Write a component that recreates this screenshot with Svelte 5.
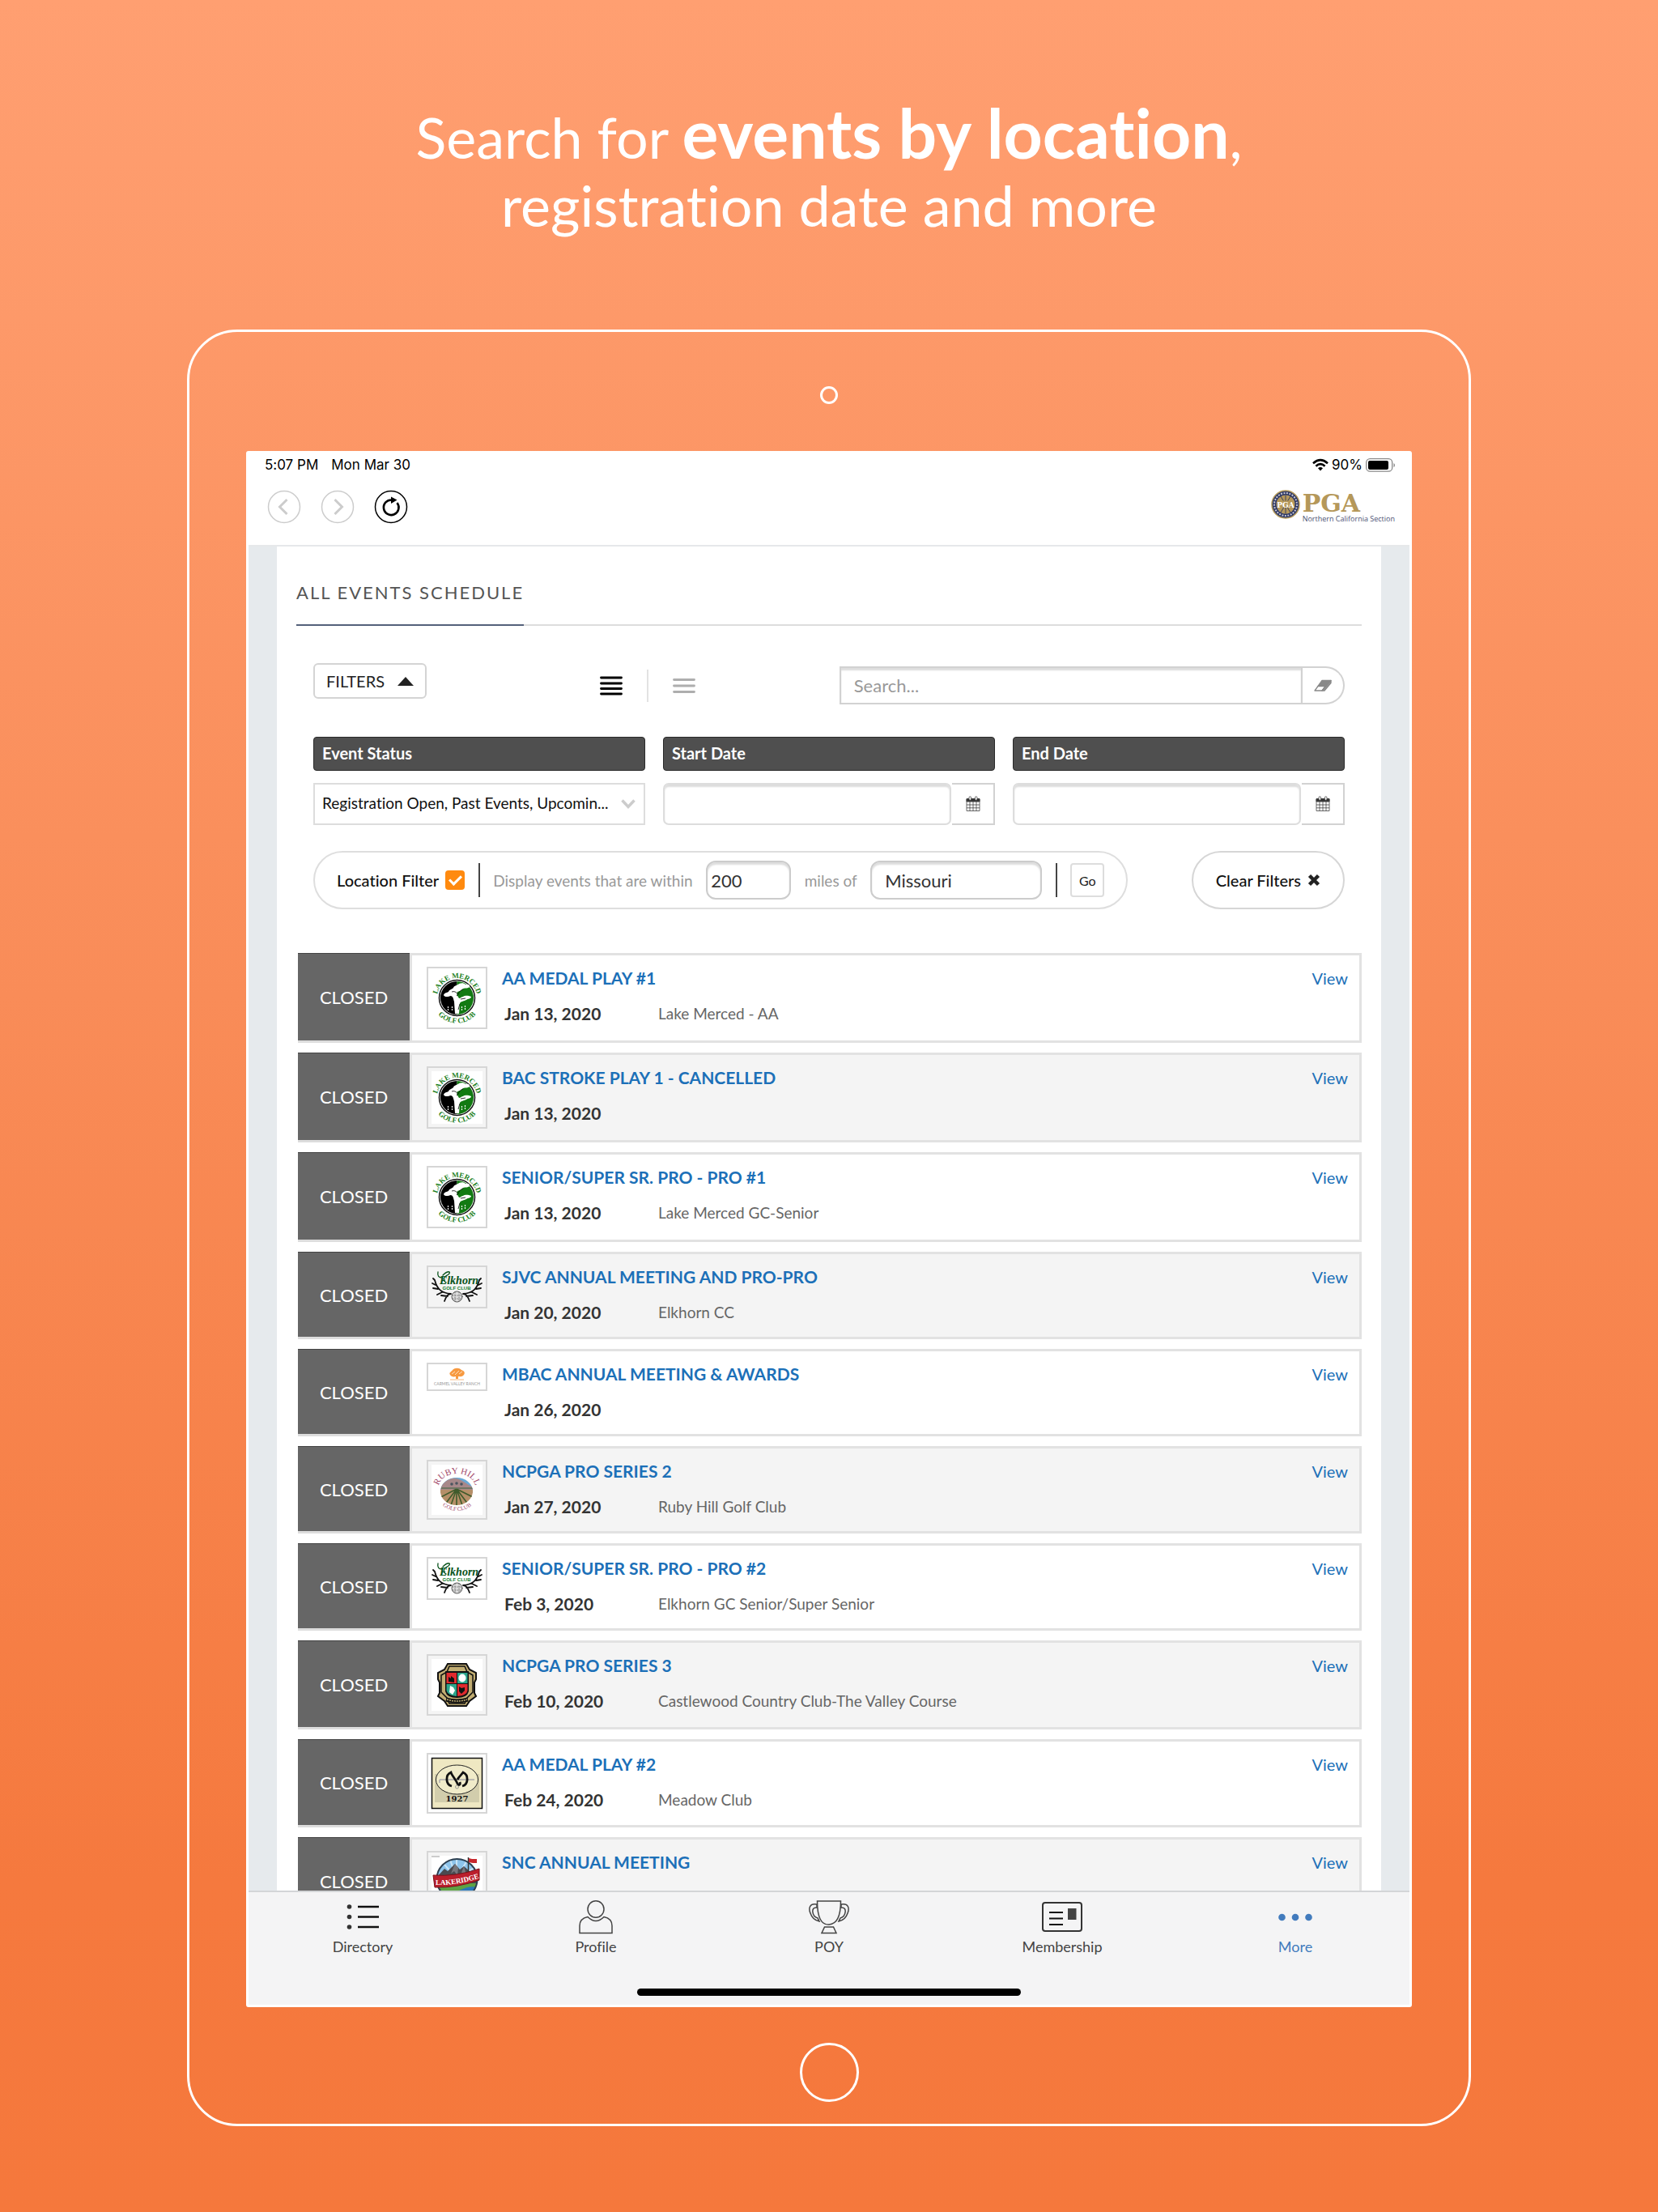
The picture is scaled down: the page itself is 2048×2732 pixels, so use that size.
<script lang="ts">
  type Event = {
    title: string;
    date: string;
    venue: string;
    logo: string;
  };

  const events: Event[] = [
    { title: 'AA MEDAL PLAY #1', date: 'Jan 13, 2020', venue: 'Lake Merced - AA', logo: 'merced' },
    { title: 'BAC STROKE PLAY 1 - CANCELLED', date: 'Jan 13, 2020', venue: '', logo: 'merced' },
    { title: 'SENIOR/SUPER SR. PRO - PRO #1', date: 'Jan 13, 2020', venue: 'Lake Merced GC-Senior', logo: 'merced' },
    { title: 'SJVC ANNUAL MEETING AND PRO-PRO', date: 'Jan 20, 2020', venue: 'Elkhorn CC', logo: 'elkhorn' },
    { title: 'MBAC ANNUAL MEETING & AWARDS', date: 'Jan 26, 2020', venue: '', logo: 'carmel' },
    { title: 'NCPGA PRO SERIES 2', date: 'Jan 27, 2020', venue: 'Ruby Hill Golf Club', logo: 'ruby' },
    { title: 'SENIOR/SUPER SR. PRO - PRO #2', date: 'Feb 3, 2020', venue: 'Elkhorn GC Senior/Super Senior', logo: 'elkhorn' },
    { title: 'NCPGA PRO SERIES 3', date: 'Feb 10, 2020', venue: 'Castlewood Country Club-The Valley Course', logo: 'castlewood' },
    { title: 'AA MEDAL PLAY #2', date: 'Feb 24, 2020', venue: 'Meadow Club', logo: 'meadow' },
    { title: 'SNC ANNUAL MEETING', date: '', venue: '', logo: 'lakeridge' }
  ];

  const tabs = ['Directory', 'Profile', 'POY', 'Membership', 'More'];

  let activeTab = $state('More');
  let compact = $state(false);
  let search = $state('');
  let startDate = $state('');
  let endDate = $state('');
  let useLocation = $state(true);
  let radius = $state('200');
  let place = $state('Missouri');

  function clearFilters() {
    search = '';
    startDate = '';
    endDate = '';
  }
</script>

{#snippet calendar()}
  <svg width="18" height="20" viewBox="0 0 18 20" fill="none" stroke="#444">
    <path d="M1 3.500h16v3.500H1z" fill="#333" />
    <path d="M1 4v14.500h16V4M1 11h16M1 14.800h16M5 7v11.500M9 7v11.500M13 7v11.500" stroke-width=".8" />
    <rect x="4" y=".8" width="2.600" height="4.500" rx="1.300" fill="#fff" stroke-width=".8" />
    <rect x="11.400" y=".8" width="2.600" height="4.500" rx="1.300" fill="#fff" stroke-width=".8" />
  </svg>
{/snippet}

{#snippet clubLogo(name: string, id: number)}
  {#if name === 'merced'}
    <svg width="63" height="65" viewBox="0 0 63 65">
      <rect width="63" height="65" fill="#fff" />
      <path id="merced-top-{id}" d="M6.500 33.500a25 25.500 0 0 1 50 0" fill="none" />
      <path id="merced-low-{id}" d="M.5 32.500a31 31 0 0 0 62 0" fill="none" />
      <g font-family="Liberation Serif, serif" font-size="9" font-weight="700" fill="#1b7f22" text-anchor="middle">
        <text><textPath href="#merced-top-{id}" startOffset="50%">LAKE MERCED</textPath></text>
        <text><textPath href="#merced-low-{id}" startOffset="50%">GOLF CLUB</textPath></text>
      </g>
      <circle cx="31.500" cy="32.500" r="22" fill="#fff" stroke="#111" stroke-width="1.500" />
      <path d="M31.500 12a20.500 20.500 0 0 0 0 41z" fill="#000" />
      <path d="M31.500 12a20.500 20.500 0 0 1 0 41z" fill="#127a12" />
      <path d="M15 29c1-3 4-3 6-4 1-3 4-3 6-5 1-3 5-3 7-5 3-1 6-1 8 1 3-1 6 0 5 3-2 2-5 1-8 2-2 3-5 3-7 4l-1 3 3 5c2 0 3-2 5-2 3-2 7-1 10 0 0 3-4 2-6 4-3 2-6 1-8 4l-1 13h-5l-1-15c-1-3-1-6-4-7-3 1-8 2-9-1z" fill="#fff" />
      <path d="M25 25c3-1 5 0 7 2M31 30c3-2 3-7 8-8M33 47l2-7M36 34l6-1" fill="none" stroke="#000" stroke-width=".8" />
      <path d="M20.500 43v6M25.500 43v6M37.500 43v5M41.500 42v5" stroke="#fff" stroke-width="1.200" stroke-dasharray="2 1" />
    </svg>
  {:else if name === 'elkhorn'}
    <svg width="63" height="41" viewBox="0 0 63 41" fill="none" stroke="#111" stroke-linecap="round">
      <path d="M4 12c3 12 9 16 20 17M5 18l-4-2M8 23l-6-1M4 12l-2-2M13 27l-6 3M24 29c-4 0-6 3-8 9M20 32l-8-1M59 12c-3 12-9 16-20 17M58 18l4-2M55 23l6-1M59 12l2-2M50 27l6 3M39 29c4 0 6 3 8 9M43 32l8-1" stroke-width="1.800" />
      <g stroke="none" fill="#0f7a28" font-weight="700" text-anchor="middle">
        <text x="34" y="17" font-size="14" font-family="Liberation Serif, serif" font-style="italic" fill="#08521a">Elkhorn</text>
        <text x="31" y="24" font-size="6" font-family="Liberation Sans, sans-serif">GOLF CLUB</text>
      </g>
      <path d="M8 2c-1 5 1 7 5 7M14 6C20 0 25 1 21 5c-6 3-8 7-3 10" stroke="#08521a" stroke-width="1.300" />
      <circle cx="31.500" cy="32.500" r="6.500" fill="#ddd" stroke="#555" />
      <path d="M26 31h11M26 35h11M29 27v11M34 27v11" stroke="#777" stroke-dasharray="1 2" />
    </svg>
  {:else if name === 'carmel'}
    <svg width="63" height="23" viewBox="0 0 63 23">
      <path d="M23 9c-2-3 2-4 3-6 3-3 8-3 11 0 3 1 5 3 3 6-2 3-5 2-7 2v3h-3v-3c-3 1-6 0-7-2z" fill="#f7993f" />
      <path d="M25 8l4-3M29 9l5-5M34 8l4-3" stroke="#fde0c2" fill="none" />
      <path d="M23 15h17" stroke="#f7b77d" />
      <text x="31.500" y="22" font-size="5" text-anchor="middle" font-family="Lato, sans-serif" fill="#999">CARMEL VALLEY RANCH</text>
    </svg>
  {:else if name === 'ruby'}
    <svg width="63" height="62" viewBox="0 0 63 62">
      <rect width="63" height="62" fill="#fff" />
      <path id="ruby-top" d="M8.500 29a23 18 0 0 1 46 0" fill="none" />
      <path id="ruby-low" d="M4.500 31a27 26 0 0 0 54 0" fill="none" />
      <g font-family="Liberation Serif, serif" fill="#a2486a" text-anchor="middle">
        <text font-size="11"><textPath href="#ruby-top" startOffset="50%">RUBY HILL</textPath></text>
        <text font-size="7"><textPath href="#ruby-low" startOffset="50%">GOLF CLUB</textPath></text>
      </g>
      <clipPath id="ruby-disc"><ellipse cx="31" cy="33" rx="20" ry="17" /></clipPath>
      <g clip-path="url(#ruby-disc)">
        <path d="M10 14h44v20H10z" fill="#69a9d6" />
        <path d="M10 28c6-7 12-12 20-11 8 1 14 8 24 12v6H10z" fill="#a7888a" />
        <path d="M10 31h44v20H10z" fill="#b58f68" />
        <path d="M31 30L8 42M31 30L16 50M31 30l-7 20M31 30v22M31 30l7 20M31 30l15 20M31 30l24 12" stroke="#3f5b2c" stroke-width="1.600" />
        <path d="M12 29h40" stroke="#5d6f55" stroke-width="1.500" />
        <circle cx="25" cy="24" r="1.800" fill="#4b5560" /><circle cx="31" cy="23" r="1.800" fill="#4b5560" /><circle cx="37" cy="24" r="1.800" fill="#4b5560" />
      </g>
    </svg>
  {:else if name === 'castlewood'}
    <svg width="63" height="64" viewBox="0 0 63 64">
      <rect width="63" height="64" fill="#fff" />
      <path d="M20 6h23l4 7 8 4v8l-2 4v13l2 4-8 6-4 6H20l-4-6-8-6 2-4V29l-2-4v-8l8-4z" fill="#c1ad72" stroke="#111" stroke-width="2" />
      <path d="M22 9h19l3 7 7 4v21l-7 7-3 7H22l-3-7-7-7V20l7-4z" fill="none" stroke="#111" stroke-width="1.500" />
      <path d="M17 15h29v25q-2 8-14.500 8T17 40z" fill="#111" />
      <path d="M18.500 17H31v13H18.500zM32 31h12.500v8q-1 6-12.500 7z" fill="#e02a2e" />
      <path d="M32 17h12.500v13H32zM18.500 31H31v15q-11-1-12.500-7z" fill="#2ca58b" />
      <ellipse cx="38" cy="23.500" rx="4.500" ry="5" fill="#fff" />
      <path d="M23 33l4 2 2 4-3 5-4-3z" fill="#fff" />
      <path d="M21 28v-6l3 2v-3l4 3v5zM34 34l3 2 4-1v4l-4 4-3-3z" fill="#111" />
      <path d="M18 50q13 4 27 0" fill="none" stroke="#111" stroke-width="5" />
      <path d="M19 50q13 4 25 0" fill="none" stroke="#c1ad72" stroke-width="1.500" stroke-dasharray="2 1" />
    </svg>
  {:else if name === 'meadow'}
    <svg width="63" height="63" viewBox="0 0 63 63">
      <rect x=".5" y=".5" width="62" height="62" fill="#efe8c2" stroke="#111" stroke-width="1.500" />
      <path d="M4 20h55v35H4z" fill="#b9b69b" opacity=".55" />
      <ellipse cx="31.500" cy="27" rx="26" ry="18" fill="#f0ebc9" stroke="#222" />
      <path d="M10 27h43M10 27v4" stroke="#aaa" stroke-width="1.500" />
      <!-- mirrored hooks joined by the diagonal of the monogram -->
      <path d="M25 35c-8-2-8-14-1-17 1 4 7 10 8 14 2 3 4 1 3-2M38 35c8-2 8-14 1-17-2 3-5 5-7 9" fill="none" stroke="#111" stroke-width="2.800" />
      <circle cx="31.500" cy="36" r="2" fill="none" stroke="#888" stroke-width=".8" />
      <text x="31.500" y="54" font-size="10" font-weight="700" text-anchor="middle" font-family="DejaVu Serif, serif" fill="#111">1927</text>
    </svg>
  {:else}
    <svg width="63" height="64" viewBox="0 0 63 64">
      <rect width="63" height="64" fill="#fff" />
      <path d="M0 1h10" stroke="#999" />
      <clipPath id="ridge-disc"><circle cx="31.500" cy="29" r="25" /></clipPath>
      <g clip-path="url(#ridge-disc)">
        <path d="M0 0h63v40H0z" fill="#8cc3ea" />
        <path d="M31 28L10 4M31 28L22 2M31 28V2M31 28L45 4M31 28l26-16" stroke="#c9e4f6" stroke-width="2" />
        <path d="M6 27l10-11 4 3 9-9 6 7 5-4 16 14v10H6z" fill="#4a4a50" />
        <path d="M29 10l-5 12 4-3 4 5 1-9zM40 13l-3 8 6 2z" fill="#77777d" />
        <path d="M0 34h63v30H0z" fill="#5da344" />
        <path d="M32 44c10-5 16-7 26-5v16H28c8-2 10-5 4-11z" fill="#2b78b8" />
      </g>
      <circle cx="31.500" cy="29" r="25" fill="none" stroke="#2c3f50" stroke-width="2" />
      <path d="M45.500 2v18" stroke="#333" stroke-width="1.500" />
      <path d="M46 3l4 1h6v5h-5l-5-1z" fill="#c7272d" />
      <path d="M2 24q29 2 57-8v14q-28 10-55 9z" fill="#bb1f2c" stroke="#7a1019" />
      <path id="ridge-band" d="M5 36q27 1 56-9" fill="none" />
      <text font-size="9" font-weight="700" font-family="Liberation Serif, serif" fill="#fff"><textPath href="#ridge-band">LAKERIDGE</textPath></text>
    </svg>
  {/if}
{/snippet}

{#snippet tabIcon(name: string)}
  <svg width="52" height="42" viewBox="0 0 52 42" fill="none" stroke="currentColor" stroke-width="1.500">
    {#if name === 'Directory'}
      <path d="M20 8h26M20 20.500h26M20 33h26" stroke="#111" stroke-width="2.500" />
      <g fill="#333" stroke="none">
        <circle cx="9.500" cy="8" r="2.800" /><circle cx="9.500" cy="20.500" r="2.800" /><circle cx="9.500" cy="33" r="2.800" />
      </g>
    {:else if name === 'Profile'}
      <ellipse cx="26" cy="11" rx="10" ry="10.200" />
      <path d="M16 20.500q-10 2-10 11v9h40v-9q0-9-10-11q-10 10-20 0z" />
    {:else if name === 'POY'}
      <path d="M11.500 1h29q0 28-14.500 29T11.500 1z" />
      <path d="M11 5C2 3 .5 10 3 16c2 6 6 9 11 10l-2-4C5 20 3 8 11 9zM41 5c9-2 10.500 5 8 11-2 6-6 9-11 10l2-4c7-2 9-14 1-13z" />
      <path d="M20.500 33h11l3.500 7.500H17z" />
    {:else if name === 'Membership'}
      <rect x="2" y="3" width="48" height="35" rx="3" stroke="#333" stroke-width="2" />
      <path d="M10 15h17M10 22.500h17M10 30h17" stroke="#111" stroke-width="2" />
      <path d="M33 10h10.500v14H33z" fill="#444" stroke="none" />
    {:else}
      <g fill="currentColor" stroke="none">
        <circle cx="9.500" cy="21" r="4.300" /><circle cx="26" cy="21" r="4.300" /><circle cx="42.500" cy="21" r="4.300" />
      </g>
    {/if}
  </svg>
{/snippet}

<div class="page">
  <h1 class="headline">
    Search for <strong>events by location</strong>,<br />registration date and more
  </h1>

  <div class="tablet">
    <div class="bezel"><span class="camera"></span></div>

    <div class="screen">
      <div class="status-bar">
        <span>5:07 PM</span>
        <span>Mon Mar 30</span>
        <div class="status-right">
          <svg width="20" height="15" viewBox="0 0 20 15" fill="none" stroke="#000" stroke-width="2.600">
            <path d="M1 5.200q9-8 18 0M4.400 8.700q5.600-5 11.200 0" />
            <path d="M10 14.500l-3-3.200q3-2.600 6 0z" fill="#000" stroke="none" />
          </svg>
          <span>90%</span>
          <svg width="37" height="17" viewBox="0 0 37 17">
            <rect x=".7" y=".7" width="32" height="15.500" rx="4.500" fill="none" stroke="#888" stroke-width="1.300" />
            <rect x="3" y="3" width="25" height="11" rx="2" />
            <path d="M34.500 6v5q1.500-.5 1.500-2.500T34.500 6z" fill="#888" />
          </svg>
        </div>
      </div>

      <header class="toolbar">
        <button class="nav-btn" aria-label="Back" disabled>
          <svg width="42" height="42" viewBox="0 0 42 42" fill="none" stroke="#ccc">
            <circle cx="21" cy="21" r="19.500" stroke-width="1.500" />
            <path d="M24.500 12l-9 9 9 9" stroke-width="3" />
          </svg>
        </button>
        <button class="nav-btn" aria-label="Forward" disabled>
          <svg width="42" height="42" viewBox="0 0 42 42" fill="none" stroke="#ccc">
            <circle cx="21" cy="21" r="19.500" stroke-width="1.500" />
            <path d="M17.500 12l9 9-9 9" stroke-width="3" />
          </svg>
        </button>
        <button class="nav-btn" aria-label="Reload">
          <svg width="42" height="42" viewBox="0 0 42 42" fill="none" stroke="#000">
            <circle cx="21" cy="21" r="19.500" stroke-width="1.500" />
            <path d="M22 12.500a9.300 9.300 0 1 0 6.500 3.500" stroke-width="2.600" />
            <path d="M21 8.500l7.500 4-7.500 4.500z" fill="#000" stroke="none" />
          </svg>
        </button>

        <div class="brand">
          <svg width="36" height="36" viewBox="0 0 36 36">
            <circle cx="18" cy="18" r="17" fill="#2b3664" stroke="#b59a5b" stroke-width="1.500" />
            <circle cx="18" cy="18" r="14" fill="none" stroke="#c8c6cf" stroke-width="2" stroke-dasharray="2 1.500" />
            <circle cx="18" cy="18" r="11.500" fill="#b5985a" />
            <path d="M12 8l12 20M24 8L12 28M18 7v22" stroke="#3b3f5e" />
            <path d="M7 13.500h22v8H7z" fill="#b5985a" />
            <text x="18" y="21.500" font-size="9" font-weight="700" text-anchor="middle" font-family="DejaVu Serif, serif" fill="#fff">PGA</text>
          </svg>
          <div class="brand-text">
            <span class="brand-name">PGA</span>
            <span class="brand-section">Northern California Section</span>
          </div>
        </div>
      </header>

      <main class="viewport">
        <div class="sheet">
          <div class="heading">
            <h2>ALL EVENTS SCHEDULE</h2>
          </div>

          <section class="filters">
            <div class="filter-bar">
              <button class="filters-btn">
                FILTERS
                <svg width="20" height="11" viewBox="0 0 20 11"><path d="M10 0l10 11H0z" fill="#222" /></svg>
              </button>

              <div class="view-modes">
                <button aria-label="Detailed list" onclick={() => (compact = false)}>
                  <svg width="28" height="26" viewBox="0 0 28 26" stroke="#000" stroke-width="2.800" stroke-linecap="round">
                    <path d="M1.500 3h25M1.500 10h25M1.500 16.500h25M1.500 23h25" />
                  </svg>
                </button>
                <span class="mode-divider"></span>
                <button aria-label="Compact list" onclick={() => (compact = true)}>
                  <svg width="28" height="26" viewBox="0 0 28 26" stroke="#aeaeae" stroke-width="2.800" stroke-linecap="round">
                    <path d="M1.500 5.500h25M1.500 13h25M1.500 20.500h25" />
                  </svg>
                </button>
              </div>

              <div class="search">
                <input type="text" placeholder="Search..." aria-label="Search" bind:value={search} />
                <button aria-label="Clear search" onclick={() => (search = '')}>
                  <svg width="22" height="16" viewBox="0 0 22 16" stroke="#888" stroke-width="1.300" stroke-linejoin="round">
                    <path d="M10 1.500h11l-5 7H5z" fill="#888" />
                    <path d="M5 8.500h9l-4 5.500H1z" fill="#fff" />
                    <path d="M21 1.500v3l-8 9.500h-3l5-5.500z" fill="#999" />
                  </svg>
                </button>
              </div>
            </div>

            <div class="fields">
              <div class="field">
                <label for="event-status">Event Status</label>
                <div class="select-wrap">
                  <select id="event-status">
                    <option>Registration Open, Past Events, Upcomin...</option>
                  </select>
                  <svg width="18" height="12" viewBox="0 0 18 12" fill="none" stroke="#ccc" stroke-width="3.500">
                    <path d="M1.500 1.500L9 9.500l7.500-8" />
                  </svg>
                </div>
              </div>
              <div class="field">
                <label for="start-date">Start Date</label>
                <div class="date-row">
                  <input id="start-date" type="text" bind:value={startDate} />
                  <button aria-label="Pick start date">{@render calendar()}</button>
                </div>
              </div>
              <div class="field">
                <label for="end-date">End Date</label>
                <div class="date-row">
                  <input id="end-date" type="text" bind:value={endDate} />
                  <button aria-label="Pick end date">{@render calendar()}</button>
                </div>
              </div>
            </div>

            <div class="location-bar">
              <div class="location">
                <label class="location-toggle">
                  Location Filter
                  <input type="checkbox" bind:checked={useLocation} />
                </label>
                <span class="rule"></span>
                <label for="radius">Display events that are within</label>
                <input id="radius" class="radius" type="text" bind:value={radius} />
                <label for="place">miles of</label>
                <input id="place" class="place" type="text" bind:value={place} />
                <span class="rule"></span>
                <button class="go-btn">Go</button>
              </div>
              <button class="clear-btn" onclick={clearFilters}>
                Clear Filters
                <svg width="16" height="16" viewBox="0 0 16 16" stroke="#222" stroke-width="4.500">
                  <path d="M2.500 2.500l11 11M13.500 2.500l-11 11" />
                </svg>
              </button>
            </div>
          </section>

          <ul class="events">
            {#each events as event, i}
              <li class="event">
                <div class="badge">CLOSED</div>
                <div class="event-body">
                  <div class="thumb">{@render clubLogo(event.logo, i)}</div>
                  <div class="details">
                    <h3>{event.title}</h3>
                    {#if !compact}
                      <div class="meta">
                        <span class="date">{event.date}</span>
                        <span class="venue">{event.venue}</span>
                      </div>
                    {/if}
                  </div>
                  <a class="view" href="#event-{i}">View</a>
                </div>
              </li>
            {/each}
          </ul>
        </div>
      </main>

      <nav class="tab-bar">
        <div class="tabs">
          {#each tabs as tab}
            <button class="tab" class:active={activeTab === tab} onclick={() => (activeTab = tab)}>
              {@render tabIcon(tab)}
              {tab}
            </button>
          {/each}
        </div>
        <div class="home-indicator"></div>
      </nav>
    </div>

    <div class="bezel bottom"><span class="home-button"></span></div>
  </div>
</div>

<style>
  :global(body) {
    margin: 0;
  }

  .page,
  .page * {
    box-sizing: border-box;
  }

  .page {
    height: 100vh;
    display: flex;
    flex-direction: column;
    padding: 122px 231px 106px;
    background: linear-gradient(#ff9f71, #f98c58 45%, #f5793e 85%, #f5783c);
    font-family: Lato, 'Open Sans', sans-serif;
    font-size: 19px;
    font-variant-ligatures: none;
    color: #222;
  }

  h1,
  h2,
  h3,
  ul {
    margin: 0;
    padding: 0;
  }

  button {
    padding: 0;
    border: none;
    background: none;
    font: inherit;
    font-variant-ligatures: none;
    color: inherit;
    cursor: pointer;
  }

  svg {
    display: block;
    flex: none;
    overflow: visible;
  }

  .headline {
    margin-bottom: 112px;
    color: #fff;
    font-size: 70px;
    font-weight: 400;
    line-height: 84px;
    text-align: center;
  }

  .headline strong {
    font-size: 84px;
    font-weight: 700;
  }

  .tablet {
    flex: 1;
    min-height: 0;
    display: flex;
    flex-direction: column;
    padding: 0 70px;
    border: 3px solid #fff;
    border-radius: 62px;
  }

  .bezel {
    flex: none;
    height: 147px;
    display: flex;
    align-items: center;
    justify-content: center;
    padding-top: 8px;
  }

  .bezel.bottom {
    height: 144px;
    padding-top: 16px;
  }

  .camera {
    width: 22px;
    height: 22px;
    border: 3px solid #fff;
    border-radius: 50%;
  }

  .home-button {
    width: 73px;
    height: 73px;
    border: 3px solid #fff;
    border-radius: 50%;
  }

  .screen {
    flex: 1;
    min-height: 0;
    display: flex;
    flex-direction: column;
    border: 3px solid #fff;
    border-radius: 3px;
    background: #fff;
  }

  .status-bar {
    height: 28px;
    display: flex;
    align-items: center;
    gap: 16px;
    padding: 0 17px 0 20px;
    font-family: Inter, sans-serif;
    font-size: 17px;
    color: #000;
  }

  .status-right {
    display: flex;
    align-items: center;
    gap: 4px;
    margin-left: auto;
  }

  .toolbar {
    display: flex;
    align-items: center;
    gap: 24px;
    padding: 17px 18px 26px 23px;
    border-bottom: 2px solid #e6e8ea;
  }

  .brand {
    display: flex;
    gap: 3px;
    margin-left: auto;
  }

  .brand-text {
    display: flex;
    flex-direction: column;
    padding-top: 4px;
  }

  .brand-name {
    color: #b5985a;
    font-family: 'DejaVu Serif', serif;
    font-size: 30px;
    font-weight: 700;
    line-height: 26px;
  }

  .brand-section {
    color: #4c5273;
    font-family: 'Open Sans', sans-serif;
    font-size: 9px;
    line-height: 12px;
  }

  .viewport {
    flex: 1;
    min-height: 0;
    overflow: hidden;
    padding: 0 35px;
    background: #e6eaed;
  }

  .sheet {
    padding: 42px 24px 0;
    background: #fff;
  }

  .heading {
    display: flex;
    border-bottom: 2px solid #ddd;
  }

  .heading h2 {
    margin-bottom: -2px;
    padding-bottom: 24px;
    border-bottom: 2px solid #54617a;
    color: #555;
    font-size: 22px;
    font-weight: 400;
    line-height: 30px;
    letter-spacing: 2px;
  }

  .filters {
    padding: 46px 21px 54px;
  }

  .filter-bar {
    display: flex;
    align-items: flex-start;
  }

  .filters-btn {
    height: 44px;
    display: flex;
    align-items: center;
    gap: 16px;
    padding: 0 14px;
    border: 2px solid #d4d4d4;
    border-radius: 6px;
    font-size: 20px;
  }

  .view-modes {
    flex: 1;
    height: 40px;
    display: flex;
    align-items: center;
    justify-content: center;
    gap: 30px;
    margin-top: 8px;
    padding-left: 36px;
  }

  .mode-divider {
    width: 2px;
    height: 40px;
    background: #e2e2e2;
  }

  .search {
    width: 49%;
    height: 47px;
    display: flex;
    margin-top: 4px;
  }

  input,
  select {
    min-width: 0;
    margin: 0;
    border: 2px solid #d2d2d2;
    background: #fff;
    font: inherit;
    font-variant-ligatures: none;
    color: #333;
    outline: none;
  }

  input[type='text'] {
    box-shadow: inset 0 3px 2px #ddd;
  }

  .search input {
    flex: 1;
    padding: 0 16px;
    font-size: 22px;
  }

  .search input::placeholder {
    color: #999;
  }

  .search button {
    width: 52px;
    display: flex;
    align-items: center;
    justify-content: center;
    border: 2px solid #d2d2d2;
    border-left: none;
    border-radius: 0 24px 24px 0;
  }

  .fields {
    display: grid;
    grid-template-columns: repeat(3, 1fr);
    gap: 22px;
    margin: 40px 0 32px;
  }

  .field {
    display: flex;
    flex-direction: column;
    gap: 15px;
  }

  .field label {
    height: 42px;
    padding: 0 10px;
    border: 1px solid #2a2a2a;
    border-radius: 4px;
    background: #4f4f4f;
    color: #fff;
    font-size: 20px;
    font-weight: 700;
    line-height: 38px;
  }

  .select-wrap {
    position: relative;
    display: flex;
  }

  .select-wrap select {
    width: 100%;
    height: 52px;
    padding: 0 30px 4px 9px;
    border-color: #ddd;
    border-radius: 0;
    appearance: none;
    color: #111;
  }

  .select-wrap svg {
    position: absolute;
    top: 20px;
    right: 12px;
  }

  .date-row {
    height: 52px;
    display: flex;
    gap: 1px;
  }

  .date-row input {
    flex: 1;
    padding: 0 10px;
    border-color: #ddd;
    border-radius: 7px;
  }

  .date-row button {
    width: 53px;
    display: flex;
    align-items: center;
    justify-content: center;
    border: 2px solid #d2d2d2;
    border-left: none;
  }

  .location-bar {
    display: flex;
    justify-content: space-between;
  }

  .location {
    width: 79%;
    height: 72px;
    display: flex;
    align-items: center;
    justify-content: space-between;
    padding: 0 27px;
    border: 2px solid #dedede;
    border-radius: 36px;
    color: #999;
  }

  .location-toggle {
    display: flex;
    align-items: center;
    gap: 8px;
    color: #111;
    font-size: 20px;
    font-weight: 500;
  }

  .location-toggle input {
    width: 24px;
    height: 24px;
    display: grid;
    place-content: center;
    appearance: none;
    border: none;
    border-radius: 4px;
    background: #ddd;
  }

  .location-toggle input:checked {
    background: #ff8a0f;
  }

  .location-toggle input:checked::before {
    content: '';
    width: 12px;
    height: 6px;
    margin-bottom: 4px;
    border: solid #fff;
    border-width: 0 0 3px 3px;
    transform: rotate(-45deg);
  }

  .rule {
    width: 2px;
    height: 42px;
    background: #444;
  }

  .location .radius,
  .location .place {
    height: 48px;
    border-color: #ccc;
    border-radius: 12px;
    font-size: 22px;
  }

  .location .radius {
    width: 105px;
    padding: 0 4px;
  }

  .location .place {
    width: 212px;
    padding: 0 16px;
  }

  .go-btn {
    width: 42px;
    height: 42px;
    border: 2px solid #ddd;
    border-radius: 4px;
    color: #222;
    font-size: 16px;
  }

  .clear-btn {
    height: 72px;
    display: flex;
    align-items: center;
    gap: 8px;
    padding: 0 28px;
    border: 2px solid #d6d6d6;
    border-radius: 36px;
    color: #111;
    font-size: 20px;
    font-weight: 500;
  }

  .events {
    display: flex;
    flex-direction: column;
    gap: 12px;
    padding-left: 2px;
    list-style: none;
  }

  .event {
    min-height: 108px;
    display: flex;
    flex: none;
  }

  .badge {
    width: 138px;
    display: flex;
    align-items: center;
    justify-content: center;
    border-top: 1px solid #444;
    border-bottom: 3px solid #ddd;
    background: #666;
    color: #fff;
    font-size: 22px;
  }

  .event-body {
    flex: 1;
    display: flex;
    align-items: flex-start;
    padding: 14px 14px 14px 18px;
    border: 3px solid #e2e2e2;
  }

  .event:nth-child(even) .event-body {
    background: #f4f4f4;
  }

  .thumb {
    padding: 4px;
    border: 2px solid #d6d6d6;
  }

  .details {
    flex: 1;
    display: flex;
    flex-direction: column;
    gap: 18px;
    padding: 1px 0 0 18px;
  }

  .details h3 {
    color: #1c70b8;
    font-size: 21px;
    font-weight: 700;
    line-height: 26px;
  }

  .meta {
    display: flex;
    padding-left: 3px;
    line-height: 26px;
  }

  .date {
    width: 190px;
    color: #333;
    font-size: 21px;
    font-weight: 700;
  }

  .venue {
    color: #666;
  }

  .view {
    padding-top: 1px;
    color: #1c70b8;
    font-size: 20px;
    line-height: 26px;
    text-decoration: none;
  }

  .tab-bar {
    border-top: 2px solid #d3d5d7;
    background: #f4f4f5;
  }

  .tabs {
    display: grid;
    grid-template-columns: repeat(5, 1fr);
    margin: 0 -3px;
    padding-top: 10px;
  }

  .tab {
    display: flex;
    flex-direction: column;
    align-items: center;
    gap: 3px;
    color: #444;
    font-size: 18px;
    line-height: 24px;
  }

  .tab.active {
    color: #427bbd;
  }

  .home-indicator {
    width: 33%;
    height: 9px;
    margin: 40px auto 11px;
    border-radius: 5px;
    background: #000;
  }
</style>
